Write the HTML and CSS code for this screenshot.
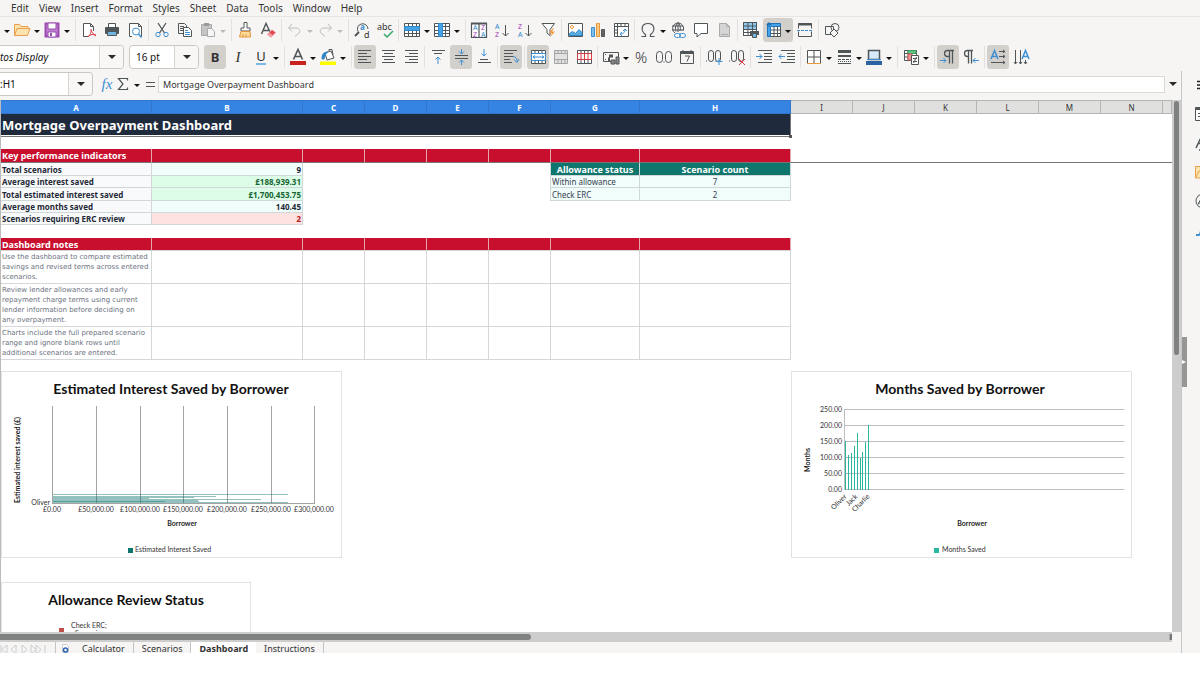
FILE: index.html
```html
<!DOCTYPE html>
<html lang="en">
<head>
<meta charset="utf-8">
<title>Mortgage Overpayment Dashboard</title>
<link rel="stylesheet" href="styles.css">
</head>
<body>
<div class="app">
<nav class="menu">
<button>Edit</button><button>View</button><button>Insert</button><button>Format</button><button>Styles</button><button>Sheet</button><button>Data</button><button>Tools</button><button>Window</button><button>Help</button>
</nav>

<div class="toolbar standard" role="toolbar" aria-label="Standard">
<button class="caret" aria-label="New options"></button>
<button class="tool" aria-label="Open"><svg viewBox="0 0 18 18"><path d="M1.500 14.500V3.500h5l1.500 2h7v2M1.500 14.500l2.500-7h13l-2.500 7z" fill="#fce3b0" stroke="#e9a04a"/></svg></button>
<button class="caret" aria-label="Open options"></button>
<button class="tool" aria-label="Save"><svg viewBox="0 0 18 18"><path d="M2.500 2.500h13v13h-13z" fill="#bf7fd0" stroke="#9a4fb0" stroke-width="2"/><path d="M5 2h8v6H5z" fill="#fff" stroke="#9a4fb0"/><path d="M5 11h8v5H5z" fill="#fff" stroke="#9a4fb0"/><path d="M7 12h2v3H7z" fill="#9a4fb0" stroke="none"/></svg></button>
<button class="caret" aria-label="Save options"></button>
<i class="sep"></i>
<button class="tool" aria-label="Export as PDF"><svg viewBox="0 0 18 18"><path d="M8 15.500H3.500v-13h7l3 3V10M10.500 2.500v3h3" fill="#fff"/><path class="red" d="M8 16c3-3 3.500-6 3-8M8.500 15c2-1.500 5-2 7.500-1M11 9c1 3 3 5 5 6"/></svg></button>
<button class="tool" aria-label="Print"><svg viewBox="0 0 18 18"><path d="M5.500 6V2.500h7V6" fill="#fff"/><rect x="2" y="6" width="14" height="7" rx="1" fill="#4f5659" stroke="none"/><path d="M4.500 10.500h9v4h-9z" fill="#71b5e3" stroke="#4f5659"/></svg></button>
<button class="tool" aria-label="Print preview"><svg viewBox="0 0 18 18"><path d="M6 15.500H3.500v-13h9l3 3v10h-1M12.500 2.500v3h3" fill="#fff"/><circle class="blue" cx="10" cy="10.500" r="3.500"/><path class="blue" d="M12.500 13l3 3.500" stroke-width="1.500"/></svg></button>
<i class="sep"></i>
<button class="tool" aria-label="Cut"><svg viewBox="0 0 18 18"><path d="M5 2l6.500 10M13 2L6.500 12" stroke-width="1.300"/><circle class="blue" cx="5" cy="13.500" r="2.200"/><circle class="blue" cx="13" cy="13.500" r="2.200"/></svg></button>
<button class="tool" aria-label="Copy"><svg viewBox="0 0 18 18"><path d="M7 12.500H2.500v-10h6l2 2V6M4 5.500h4M4 7.500h3M4 9.500h3"/><path d="M7.500 6.500h5l3 3v6h-8z" fill="#fff"/><path class="blue" d="M9 9.500h3M9 11.500h5M9 13.500h5"/></svg></button>
<button class="tool off" aria-label="Paste"><svg viewBox="0 0 18 18"><path d="M2.500 3.500h10v11h-10z" fill="#c5c5c5" stroke="#aaa"/><path d="M5 2h5v3H5z" fill="#999" stroke="none"/><path d="M8.500 7.500h4l3 3v5h-7z" fill="#f6f6f6" stroke="#aaa"/></svg></button>
<button class="caret off" aria-label="Paste options"></button>
<i class="sep"></i>
<button class="tool" aria-label="Clone formatting"><svg viewBox="0 0 18 18"><path d="M8 7V1.500h3V7h3v3H5V7z" fill="#fff"/><path d="M5 10.500l-1.500 5.500h11l-.5-5.500zM7 13v3M10 13v3" fill="#fcdc9d" stroke="#e4963a"/></svg></button>
<button class="tool" aria-label="Clear formatting"><svg viewBox="0 0 18 18"><path d="M2.500 13L7 2.500 11.500 12M4 9.500h6" stroke-width="1.400"/><path d="M8 13.500l5-5 4 3-5 5z" fill="#e04b53" stroke="#fff" stroke-width=".5"/><path d="M8 13.500l2-2 4 3-2 2z" fill="#f0a0a5" stroke="none"/></svg></button>
<i class="sep"></i>
<button class="tool off" aria-label="Undo"><svg viewBox="0 0 18 18"><path d="M6 3L2.500 7 6 10.500M3 7h7c4 0 5 4 2 6l-3 2.500" stroke="#bbb"/></svg></button>
<button class="caret off" aria-label="Undo options"></button>
<button class="tool off" aria-label="Redo"><svg viewBox="0 0 18 18"><path d="M12 3l3.500 4-3.500 3.500M15 7H8c-4 0-5 4-2 6l3 2.500" stroke="#bbb"/></svg></button>
<button class="caret off" aria-label="Redo options"></button>
<i class="sep"></i>
<button class="tool" aria-label="Find and replace"><svg viewBox="0 0 18 18"><path d="M5 10.500A5.300 5.300 0 1 1 15 8"/><path d="M6 11l-4 4" stroke-width="2"/><text class="ta" x="7" y="9">a</text><text class="tb" x="11" y="17">d</text></svg></button>
<button class="tool" aria-label="Spelling"><svg viewBox="0 0 18 18"><text class="abc" x="1" y="9">abc</text><path d="M8 13l3 3 6-6" stroke="#34a866" stroke-width="1.500"/></svg></button>
<i class="sep"></i>
<button class="tool" aria-label="Row"><svg viewBox="0 0 18 18"><path d="M1.500 2.500h15v13h-15zM5.500 2.500v13M9.500 2.500v13M13.500 2.500v13M1.500 12.500h15" fill="#fff"/><path d="M1.500 5.500h15v4h-15z" fill="#45a4e6" stroke="#2f86c8"/></svg></button>
<button class="caret" aria-label="Row options"></button>
<button class="tool" aria-label="Column"><svg viewBox="0 0 18 18"><path d="M1.500 2.500h15v13h-15zM1.500 5.500h15M1.500 9.500h15M1.500 12.500h15M12.500 2.500v13" fill="#fff"/><path d="M5.500 2.500h4v13h-4z" fill="#45a4e6" stroke="#2f86c8"/></svg></button>
<button class="caret" aria-label="Column options"></button>
<i class="sep"></i>
<button class="tool" aria-label="Sort"><svg viewBox="0 0 18 18"><path d="M1.500 2.500h15v14h-15zM9 2v15" fill="#fff" stroke-width="1.200"/><path d="M1 2.500h16" stroke-width="2"/><text class="sa" x="3" y="9">A</text><text class="sz" x="3" y="16">Z</text><text class="sz" x="11" y="9">Z</text><text class="sa" x="11" y="16">A</text></svg></button>
<button class="tool" aria-label="Sort ascending"><svg viewBox="0 0 18 18"><text class="sa" x="2" y="8">A</text><text class="sz" x="2" y="16">Z</text><path d="M12.500 4v11M9.500 12l3 3 3-3"/></svg></button>
<button class="tool" aria-label="Sort descending"><svg viewBox="0 0 18 18"><text class="sz" x="2" y="8">Z</text><text class="sa" x="2" y="16">A</text><path d="M12.500 4v11M9.500 12l3 3 3-3"/></svg></button>
<button class="tool" aria-label="AutoFilter"><svg viewBox="0 0 18 18"><path d="M3 2.500h12.500L11 8.500v6l-3-2.500V8.500z" fill="#fff"/><path d="M14 7l-4 5h3l-2 4.500 5-6h-3l2-3.500z" fill="#f49b42" stroke="none"/></svg></button>
<i class="sep"></i>
<button class="tool" aria-label="Insert image"><svg viewBox="0 0 18 18"><path d="M2.500 2.500h14v13h-14z" fill="#fff"/><circle cx="6" cy="6" r="1.500" stroke="#f09a3c"/><path d="M3.500 14.500v-2l3-2 3 2 3.500-4 3 3v3z" fill="#5dacdf" stroke="#2f86c8"/></svg></button>
<button class="tool" aria-label="Insert chart"><svg viewBox="0 0 18 18"><path d="M2.500 6.500h3v9h-3z" fill="#80c1ec" stroke="#3d8fd1"/><path d="M7.500 2.500h3v13h-3z" fill="#fcc880" stroke="#e9983d"/><path d="M12.500 8.500h3v7h-3z" fill="#666"/></svg></button>
<button class="tool" aria-label="Pivot table"><svg viewBox="0 0 18 18"><path d="M2.500 2.500h14v13h-14zM2.500 5.500h14M5.500 2.500v13M9 2.500v3M13 2.500v3M2.500 9h3M2.500 12h3" fill="#fff"/><path class="blue" d="M8 13c4 0 5-2 5-5M8 13l2-2M8 13l2 2M13 8l-2 2M13 8l2 2"/></svg></button>
<i class="sep"></i>
<button class="tool" aria-label="Special character"><svg viewBox="0 0 18 18"><path d="M2.500 15.500h4v-2C1 9.500 2.500 2.500 9 2.500s8 7 2.500 11v2h4" stroke-width="1.200"/></svg></button>
<button class="caret" aria-label="Special character options"></button>
<button class="tool" aria-label="Hyperlink"><svg viewBox="0 0 18 18"><path d="M6 12A5.500 5.500 0 1 1 14 10M3 5h11M3 9h11M9 1.500c-3 3-3 6-2 9M9 1.500c2 2 3 5 2 8.500M9 2v9"/><rect class="blue" x="5.500" y="12.500" width="6" height="4" rx="2"/><rect class="blue" x="10.500" y="12.500" width="6" height="4" rx="2"/></svg></button>
<button class="tool" aria-label="Comment"><svg viewBox="0 0 18 18"><path d="M2.500 2.500h13v10H9l-4 3.500v-3.500H2.500z" fill="#fff"/></svg></button>
<button class="tool off" aria-label="Headers and footers"><svg viewBox="0 0 18 18"><path d="M4.500 2.500h7l3 3v10h-10z" fill="#d5d5d5" stroke="#aaa"/><path d="M6 13.500h7M11.500 2.500v3h3" stroke="#aaa"/></svg></button>
<i class="sep"></i>
<button class="tool" aria-label="Define print area"><svg viewBox="0 0 18 18"><path d="M1.500 1.500h13v13h-13z" fill="#fff"/><path d="M1.500 1.500h13v7h-13z" fill="#8ecaf0" stroke="none"/><path d="M1.500 1.500h13v13h-13zM1.500 5h13M1.500 8.500h13M1.500 11.500h13M6 1.500v13M10.500 1.500v13"/><rect x="8" y="10" width="9" height="4" fill="#4f5659" stroke="none"/><path d="M10.500 12.500h4v4h-4z" fill="#71b5e3"/></svg></button>
<span class="split on"><button class="tool" aria-label="Freeze rows and columns"><svg viewBox="0 0 18 18"><path d="M5.500 5.500h10v10h-10zM9 5v11M12.500 5v11M5 9h11M5 12.500h11" fill="#fff"/><path d="M2.500 2.500h13v3h-10v10h-3z" fill="#45a4e6" stroke="#2272b5"/><path d="M4 1v5M1.500 3.500h5" stroke="#2272b5"/></svg></button><button class="caret" aria-label="Freeze options"></button></span>
<button class="tool" aria-label="Split window"><svg viewBox="0 0 18 18"><path d="M2.500 7.500v-5h13v5M2.500 10.500v5h13v-5"/><path d="M2 3.500h14" stroke-width="2"/><path class="blue" d="M1 9.500h16" stroke-dasharray="3 1"/></svg></button>
<i class="sep"></i>
<button class="tool" aria-label="Show draw functions"><svg viewBox="0 0 18 18"><path d="M2.500 5.500h8v8h-8z"/><circle cx="12" cy="6.500" r="4"/><path d="M11 8l4 4-4 4-4-4z" fill="#f6f5f4"/></svg></button>
</div>

<div class="toolbar format" role="toolbar" aria-label="Formatting">
<span class="combo font"><input aria-label="Font name" value="tos Display"><button aria-label="Choose font"></button></span>
<span class="combo size"><input aria-label="Font size" value="16 pt"><button aria-label="Choose size"></button></span>
<button class="tool on glyph bold" aria-label="Bold">B</button>
<button class="tool glyph ital" aria-label="Italic">I</button>
<button class="tool glyph under" aria-label="Underline"><span>U</span></button>
<button class="caret" aria-label="Underline options"></button>
<i class="sep"></i>
<button class="tool" aria-label="Font colour"><svg viewBox="0 0 18 18"><path d="M4.500 11.500L9 1.500l4.500 10M6 8.500h6" stroke-width="1.600"/><path d="M1 13h16v4H1z" fill="#c9211e" stroke="none"/></svg></button>
<button class="caret" aria-label="Font colour options"></button>
<button class="tool" aria-label="Highlighting"><svg viewBox="0 0 18 18"><path d="M6 5l6-2 3 7-7 2zM10 3V1.500h3L14 7" fill="#fff"/><path d="M3 11c0-4 1-7 6-7-3 1-3 5-4 7z" fill="#2f86c8" stroke="#2f86c8"/><path d="M1 13.500h16V17H1z" fill="#ffff00" stroke="none"/></svg></button>
<button class="caret" aria-label="Highlighting options"></button>
<i class="sep"></i>
<button class="tool on" aria-label="Align left"><svg viewBox="0 0 18 18"><path d="M2 2.500h13M2 5.500h9M2 8.500h13M2 11.500h9M2 14.500h13"/></svg></button>
<button class="tool" aria-label="Centre"><svg viewBox="0 0 18 18"><path d="M3 2.500h13M5 5.500h9M3 8.500h13M5 11.500h9M3 14.500h13"/></svg></button>
<button class="tool" aria-label="Align right"><svg viewBox="0 0 18 18"><path d="M3 2.500h13M7 5.500h9M3 8.500h13M7 11.500h9M3 14.500h13"/></svg></button>
<i class="sep"></i>
<button class="tool" aria-label="Align top"><svg viewBox="0 0 18 18"><path d="M3 2.500h13M5 5.500h8"/><path class="blue" d="M9 16V9M6.500 11.500L9 9l2.500 2.500"/></svg></button>
<button class="tool on" aria-label="Centre vertically"><svg viewBox="0 0 18 18"><path d="M3 7.500h13M3 10.500h13"/><path class="blue" d="M9.500 1v5M7 3.500L9.500 6 12 3.500M9.500 17v-5M7 14.500l2.500-2.500 2.500 2.500"/></svg></button>
<button class="tool" aria-label="Align bottom"><svg viewBox="0 0 18 18"><path d="M3 14.500h13M5 11.500h8"/><path class="blue" d="M9 1v7M6.500 5.500L9 8l2.500-2.500"/></svg></button>
<i class="sep"></i>
<button class="tool on" aria-label="Wrap text"><svg viewBox="0 0 18 18"><path d="M2 2.500h13M2 5.500h9M2 8.500h9M2 11.500h6M2 14.500h8"/><path class="blue" d="M11 8.500c3 0 4 2 4 5M12 11.500l3 3 2-3.500"/></svg></button>
<i class="sep"></i>
<button class="tool on" aria-label="Merge and centre"><svg viewBox="0 0 18 18"><path d="M2.500 2.500h14v13h-14zM6 2.500v3M9.500 2.500v3M13 2.500v3M6 12.500v3M9.500 12.500v3M13 12.500v3" fill="#fff"/><path class="blue" d="M2.500 5.500h14v7h-14zM4 9h11M6 7.500L4 9l2 1.500M13 7.500L15 9l-2 1.500"/></svg></button>
<button class="tool off" aria-label="Merge cells"><svg viewBox="0 0 18 18"><path d="M2.500 2.500h13v13h-13zM2.500 5.500h13M2.500 11.500h13M6 2.500v3M9.500 2.500v3M13 2.500v3M6 11.500v4M9.500 11.500v4M13 11.500v4" fill="#e2e2e2" stroke="#a5a5a5"/></svg></button>
<button class="tool" aria-label="Unmerge cells"><svg viewBox="0 0 18 18"><path d="M2.500 2.500h14v13h-14zM6 2.500v3M9.500 2.500v3M13 2.500v3M6 12v3M9.500 12v3M13 12v3" fill="#fff"/><path class="red" d="M2.500 5.500h14v6h-14zM6 5.500v6M9.500 5.500v6M13 5.500v6"/></svg></button>
<i class="sep"></i>
<button class="tool" aria-label="Currency"><svg viewBox="0 0 18 18"><path d="M9 13.500H1.500v-9h15V9M3 6.500h1M3 11.500h1"/><path d="M7 6.500h4v3H8v4H6v-4h1z" fill="#555" stroke="none"/><path d="M9 12h4v4H9zM14 9h3v7h-3z" fill="#888"/></svg></button>
<button class="caret" aria-label="Currency options"></button>
<button class="tool glyph num" aria-label="Percent">%</button>
<button class="tool" aria-label="Number"><svg viewBox="0 0 18 18"><rect x="1.500" y="3.500" width="6" height="11" rx="3"/><rect x="10.500" y="3.500" width="6" height="11" rx="3"/><path d="M8.500 14h1"/></svg></button>
<button class="tool" aria-label="Date"><svg viewBox="0 0 18 18"><path d="M2.500 3.500h13v12h-13zM5 2v3M13 2v3M7 8h4.500L9 13.500"/><path d="M3 5h12" stroke-width="2"/></svg></button>
<i class="sep"></i>
<button class="tool" aria-label="Add decimal place"><svg viewBox="0 0 18 18"><rect x="3.500" y="2.500" width="5" height="11" rx="2.500"/><rect x="10.500" y="2.500" width="5" height="11" rx="2.500"/><path d="M1 13h1"/><path class="blue" d="M14 10v7M10.500 13.500h7"/></svg></button>
<button class="tool" aria-label="Delete decimal place"><svg viewBox="0 0 18 18"><rect x="3.500" y="2.500" width="5" height="11" rx="2.500"/><rect x="10.500" y="2.500" width="5" height="11" rx="2.500"/><path d="M1 13h1"/><path class="red" d="M11 11l6 6M17 11l-6 6"/></svg></button>
<i class="sep"></i>
<button class="tool" aria-label="Increase indent"><svg viewBox="0 0 18 18"><path d="M3 2.500h14M9 5.500h8M9 8.500h8M9 11.500h8M3 14.500h14"/><path class="blue" d="M1 8.500h6M4.500 6L7 8.500 4.500 11"/></svg></button>
<button class="tool" aria-label="Decrease indent"><svg viewBox="0 0 18 18"><path d="M3 2.500h14M9 5.500h8M9 8.500h8M9 11.500h8M3 14.500h14"/><path class="blue" d="M1 8.500h6M3.500 6L1 8.500 3.500 11"/></svg></button>
<i class="sep"></i>
<button class="tool" aria-label="Borders"><svg viewBox="0 0 18 18"><path d="M2.500 15.500v-13h13v13M9 2.500v13M2.500 9h13" fill="#fff"/><path d="M2 15.500h14" stroke="#e9983d"/></svg></button>
<button class="caret" aria-label="Border options"></button>
<button class="tool" aria-label="Border style"><svg viewBox="0 0 18 18"><path d="M3 3.500h13" stroke-width="3"/><path d="M3 8h13" stroke-width="2"/><path d="M3 11.500h13" stroke-dasharray="3 1"/><path d="M3 13.500h13" stroke-dasharray="1 1"/><path d="M3 15.500h13"/></svg></button>
<button class="caret" aria-label="Border style options"></button>
<button class="tool" aria-label="Border colour"><svg viewBox="0 0 18 18"><path d="M3.500 2.500h11v9h-11z" fill="#d6eafa" stroke-width="1.500"/><path d="M2 11.500h14" class="blue"/><path d="M1 13h16v4H1z" fill="#2b62a4" stroke="none"/></svg></button>
<button class="caret" aria-label="Border colour options"></button>
<i class="sep"></i>
<button class="tool" aria-label="Conditional formatting"><svg viewBox="0 0 18 18"><path d="M2.500 2.500h12v10h-12zM2.500 5.500h12M2.500 9h12M6 2.500v10" fill="#fff"/><path d="M6 2.500h8v3H6z" fill="#63c584" stroke="#3d9d5e"/><path d="M6 6h4v6H6z" fill="#f09393" stroke="#d06060"/><path d="M9.500 7.500h7v9h-7zM11 10.500h4M11 13.500h4M14.500 9l-3 6" fill="#fff"/></svg></button>
<button class="caret" aria-label="Conditional formatting options"></button>
<i class="sep"></i>
<button class="tool on" aria-label="Left to right"><svg viewBox="0 0 18 18"><path d="M15 2.500H8.500a3 3 0 0 0 0 6H10M10.500 2.500v13M13.500 2.500v13" stroke-width="1.300"/><path class="blue" d="M1 12.500h6M4.500 10L7 12.500 4.500 15"/></svg></button>
<button class="tool" aria-label="Right to left"><svg viewBox="0 0 18 18"><path d="M11 2.500H5.500a3 3 0 0 0 0 6H6M6.500 2.500v13M9.500 2.500v13" stroke-width="1.300"/><path class="blue" d="M17 12.500h-6M13.500 10L11 12.500l2.500 2.500"/></svg></button>
<i class="sep"></i>
<button class="tool on" aria-label="Text left to right"><svg viewBox="0 0 18 18"><path class="blue" d="M2 11L5.500 2.500 9 11M3 8.500h5" stroke-width="1.500"/><path d="M10 3.500h6M14 2l2 1.500L14 5M10 8.500h6M14 7l2 1.500-2 1.500M2 14.500h14M14 13l2 1.500-2 1.500"/></svg></button>
<button class="tool" aria-label="Text top to bottom"><svg viewBox="0 0 18 18"><path class="blue" d="M10 11l3.500-8.500L17 11M11 8.500h5" stroke-width="1.500"/><path d="M3.500 2v14M2 14l1.500 2L5 14M8.500 2v14M7 14l1.500 2 1.500-2M13.500 12v4M12 14l1.500 2 1.500-2"/></svg></button>
</div>

<div class="body">
<main class="work">
<div class="formula">
<span class="combo name"><input aria-label="Name box" value=":H1"><button aria-label="Named ranges"></button></span>
<button class="fx" aria-label="Function wizard"><i>fx</i></button>
<button class="sigma" aria-label="Select function"><svg viewBox="0 0 12 14"><path d="M10.500 3.500v-2h-9L6 7l-4.500 5.500h9v-2" stroke-width="1.200"/></svg></button>
<button class="caret" aria-label="Function options"></button>
<button class="equals" aria-label="Formula"></button>
<input class="line" aria-label="Input line" value="Mortgage Overpayment Dashboard">
<button class="expand" aria-label="Expand formula bar"></button>
</div>
<div class="view">
<div class="sheet">
<table>
<colgroup><col class="wide"><col class="wide"><col class="std"><col class="std"><col class="std"><col class="std"><col class="mid"><col class="wide"><col class="std"><col class="std"><col class="std"><col class="std"><col class="std"><col class="std"><col></colgroup>
<thead><tr><th class="sel">A</th><th class="sel">B</th><th class="sel">C</th><th class="sel">D</th><th class="sel">E</th><th class="sel">F</th><th class="sel">G</th><th class="sel">H</th><th>I</th><th>J</th><th>K</th><th>L</th><th>M</th><th>N</th><th></th></tr></thead>
<tbody>
<tr><td class="title" colspan="8">Mortgage Overpayment Dashboard<i class="grip"></i></td><td colspan="7"></td></tr>
<tr><td colspan="15"></td></tr>
<tr class="section frozen"><td>Key performance indicators</td><td></td><td></td><td></td><td></td><td></td><td></td><td></td><td class="plain" colspan="7"></td></tr>
<tr class="tall"><td class="label">Total scenarios</td><td class="value mint">9</td><td colspan="3"></td><td class="edge"></td><td class="head">Allowance status</td><td class="head">Scenario count</td><td colspan="7"></td></tr>
<tr><td class="label">Average interest saved</td><td class="value good">£188,939.31</td><td colspan="3"></td><td class="edge"></td><td class="text mint">Within allowance</td><td class="count mint">7</td><td colspan="7"></td></tr>
<tr class="tall"><td class="label">Total estimated interest saved</td><td class="value good">£1,700,453.75</td><td colspan="3"></td><td class="edge"></td><td class="text mint">Check ERC</td><td class="count mint">2</td><td colspan="7"></td></tr>
<tr><td class="label">Average months saved</td><td class="value mint">140.45</td><td colspan="13"></td></tr>
<tr><td class="label">Scenarios requiring ERC review</td><td class="value bad">2</td><td colspan="13"></td></tr>
<tr class="tall"><td colspan="15"></td></tr>
<tr class="section"><td>Dashboard notes</td><td></td><td></td><td></td><td></td><td></td><td></td><td></td><td class="plain" colspan="7"></td></tr>
<tr class="note"><td>Use the dashboard to compare estimated<br>savings and revised terms across entered<br>scenarios.</td><td></td><td></td><td></td><td></td><td></td><td></td><td></td><td class="plain" colspan="7"></td></tr>
<tr class="note"><td>Review lender allowances and early<br>repayment charge terms using current<br>lender information before deciding on<br>any overpayment.</td><td></td><td></td><td></td><td></td><td></td><td></td><td></td><td class="plain" colspan="7"></td></tr>
<tr class="note"><td>Charts include the full prepared scenario<br>range and ignore blank rows until<br>additional scenarios are entered.</td><td></td><td></td><td></td><td></td><td></td><td></td><td></td><td class="plain" colspan="7"></td></tr>
</tbody>
</table>

<svg class="chart interest" viewBox="0 0 339 185" role="img" aria-label="Estimated Interest Saved by Borrower">
<text class="ct" x="169" y="22">Estimated Interest Saved by Borrower</text>
<text class="at" transform="translate(18 88) rotate(-90)">Estimated interest saved (£)</text>
<path class="grid" d="M50.500 34v98M94.500 34v98M138.500 34v98M181.500 34v98M225.500 34v98M269.500 34v98M312.500 34v98M50 131.500h263"/>
<path class="bars" d="M51 122.500h235M51 124.500h163M51 126.500h96M51 127.500h208M51 129.500h146M51 130.500h235"/>
<path class="bars" d="M51 125.500h141M51 128.500h145M51 129.500h112"/>
<text class="tk end" x="48" y="133">Oliver</text>
<g class="tk"><text x="50" y="140">£0.00</text><text x="94" y="140">£50,000.00</text><text x="138" y="140">£100,000.00</text><text x="181" y="140">£150,000.00</text><text x="225" y="140">£200,000.00</text><text x="269" y="140">£250,000.00</text><text x="312" y="140">£300,000.00</text></g>
<text class="at" x="180" y="154">Borrower</text>
<path d="M126 176h5v5h-5z" fill="#0f766e"/><text class="tk start" x="133" y="180">Estimated Interest Saved</text>
</svg>
<svg class="chart months" viewBox="0 0 339 185" role="img" aria-label="Months Saved by Borrower">
<text class="ct" x="168" y="22">Months Saved by Borrower</text>
<text class="at" transform="translate(18 88) rotate(-90)">Months</text>
<path class="grid light" d="M53 37.500h279M53 53.500h279M53 69.500h279M53 85.500h279M53 101.500h279M53 117.500h279M52.500 37v81"/>
<path class="teal" d="M53.500 118V69M56.500 118V83M59.500 118V81M62.500 118V74M65.500 118V61M68.500 118V86M70.500 118V80M73.500 118V70M76.500 118V53"/>
<g class="tk end"><text x="50" y="40">250.00</text><text x="50" y="56">200.00</text><text x="50" y="72">150.00</text><text x="50" y="88">100.00</text><text x="50" y="104">50.00</text><text x="50" y="120">0.00</text>
<text transform="translate(55 125) rotate(-45)">Oliver</text><text transform="translate(66 125) rotate(-45)">Jack</text><text transform="translate(78 125) rotate(-45)">Charlie</text></g>
<text class="at" x="180" y="154">Borrower</text>
<path d="M142 176h5v5h-5z" fill="#2ab7a0"/><text class="tk start" x="150" y="180">Months Saved</text>
</svg>
<svg class="chart status" viewBox="0 0 248 148" role="img" aria-label="Allowance Review Status">
<text class="ct" x="124" y="22">Allowance Review Status</text>
<path d="M57 45h5v5h-5z" fill="#c0504d"/>
<text class="tk start" x="69" y="45">Check ERC;</text><text class="tk start" x="73" y="53">Scenario</text>
</svg>
</div>
<div class="vbar"><div class="thumb"></div></div>
</div>
<div class="hrow"><div class="hbar"><div class="thumb"></div><div class="stop"></div></div></div>
<div class="tabs">
<svg class="arrows" viewBox="0 0 48 14"><path d="M1 3v9M7 3L2 7.500 7 12zM16 3l-5 4.500L16 12zM22 3l5 4.500L22 12zM31 3l5 4.500L31 12zM36 3l5 4.500L36 12zM45 3v9"/></svg>
<button class="add" aria-label="Add sheet"><svg viewBox="0 0 9 12"><path d="M1.500 1.500h4l2 2v6h-6z" fill="#fff" stroke="#ccc"/><circle cx="4.500" cy="7" r="2" stroke="#2b62b8" stroke-width="1.500"/></svg></button>
<button>Calculator</button><button>Scenarios</button><button class="current">Dashboard</button><button>Instructions</button>
</div>
</main>
<aside class="side">
<button class="handle" aria-label="Hide sidebar"></button>
<div class="deck">
<button aria-label="Sidebar settings"><svg viewBox="0 0 18 18"><path d="M2 5.500h14M2 9h14M2 12.500h14" stroke="#222" stroke-width="1.500"/></svg></button>
<button aria-label="Properties"><svg viewBox="0 0 18 18"><path d="M.5 2.500h17v13H.5zM3 8.500h5M3 11.500h5" fill="#fff"/><path d="M1 4h16" stroke-width="2"/></svg></button>
<button aria-label="Styles"><svg viewBox="0 0 18 18"><path d="M1 14L6.500 2.500 12 14M3 9.500h7M4 16h3" stroke-width="1.500"/></svg></button>
<button aria-label="Gallery"><svg viewBox="0 0 18 18"><path d="M.5 15V3.500h6l2 2h7V15zM1 14l3-6h12" fill="#fce3b0" stroke="#e9a04a"/></svg></button>
<button aria-label="Navigator"><svg viewBox="0 0 18 18"><circle cx="8" cy="9" r="7"/><path d="M3 12l3-5 4-2-2 4z"/></svg></button>
<button aria-label="Functions"><svg viewBox="0 0 18 18"><path class="blue" d="M1 14h3c2 0 2-9 5-9" stroke-width="2"/></svg></button>
</div>
</aside>
</div>
</div>
</body>
</html>
```
FILE: styles.css
```css
* { box-sizing: border-box; }
body { margin: 0; background: #fff; font-family: "Noto Sans", sans-serif; color: #333; }
button, input { font: inherit; color: inherit; margin: 0; padding: 0; border: 0; background: none; }
svg { display: block; fill: none; stroke: #505558; overflow: visible; }
svg text { stroke: none; fill: #333; }
.blue { stroke: #3d8fd1; }
.red { stroke: #d93a41; }

.app { display: flex; flex-direction: column; height: calc(100vh - 22px); background: #f6f5f4; overflow: hidden; }

.menu { display: flex; gap: 10px; height: 17px; padding-left: 11px; border-bottom: 1px solid #e6e5e3; font-size: 10px; line-height: 16px; }

.toolbar { display: flex; align-items: center; gap: 1px; height: 27px; flex: none; padding-bottom: 1px; }
.standard { padding-left: 4px; }
.tool { display: flex; align-items: center; justify-content: center; flex: none; width: 22px; height: 24px; border-radius: 3px; }
.tool svg { width: 18px; height: 18px; }
.on { background: #d3d0cc; border-radius: 3px; }
.split { display: flex; align-items: center; width: 30px; height: 24px; }
.caret { flex: none; width: 6px; height: 24px; }
.caret::before { content: ""; display: block; margin: 2px auto 0; width: 0; border: 3px solid transparent; border-top-color: #111; border-bottom: 0; }
.caret.off::before { border-top-color: #bbb; }
.sep { flex: none; width: 1px; height: 22px; margin: 0 1px; background: #e2e1df; }
.caret + .sep { margin-left: 4px; }
.ta { font-size: 8px; font-weight: bold; fill: #3d8fd1; }
.tb { font-size: 9px; }
.abc { font-size: 9px; }
.sa { font-size: 7px; fill: #2f86c8; }
.sz { font-size: 7px; fill: #a33fb5; }
.glyph { font-size: 13px; line-height: 24px; }
.bold { font-weight: bold; }
.ital { font-family: "Liberation Serif", serif; font-style: italic; font-size: 15px; }
.under span { border-bottom: 2px solid #7bb8e4; line-height: 13px; }
.num { font-size: 15px; font-weight: 300; }

.combo { display: flex; flex: none; height: 24px; border: 1px solid #cdc7c2; border-radius: 4px; background: #fff; font-size: 10px; overflow: hidden; }
.combo input { flex: 1; min-width: 0; color: #111; }
.combo button { width: 24px; border-left: 1px solid #d8d4d0; background: #f8f7f6; }
.combo button::before, .expand::before { content: ""; display: block; width: 0; margin: 0 auto; border: 4px solid transparent; border-top-color: #2b2b2b; border-bottom: 0; }
.font { width: 124px; margin-right: 4px; border-left: 0; border-radius: 0 4px 4px 0; font-style: italic; }
.size { width: 70px; margin-right: 4px; }
.size input { padding-left: 6px; }

.body { display: flex; flex: 1; min-height: 0; }
.work { display: flex; flex-direction: column; flex: 1; min-width: 0; }
.formula { display: flex; align-items: center; flex: none; height: 29px; padding-bottom: 3px; }
.name { width: 93px; margin-right: 7px; border-left: 0; border-radius: 0 4px 4px 0; }
.fx { width: 14px; color: #3d8fd1; font: 15px "Liberation Serif", serif; }
.sigma { width: 12px; margin: 0 5px 0 3px; }
.sigma svg { width: 12px; height: 14px; }
.equals { width: 9px; height: 5px; margin: 0 3px 0 6px; border: solid #555; border-width: 1px 0; }
.line { flex: 1; height: 17px; padding-left: 4px; border: 1px solid #dcdad7; background: #fff; font-size: 9px; }
.expand { width: 16px; }

.view { display: flex; flex: 1; min-height: 0; }
.sheet { position: relative; flex: 1; min-width: 0; overflow: hidden; background: #fff; border-left: 1px solid #bcbcbc; }
table { width: 100%; table-layout: fixed; border-collapse: separate; border-spacing: 0; font-size: 8px; line-height: 11px; }
.wide { width: 151px; }
.std { width: 62px; }
.mid { width: 89px; }
th { height: 14px; padding: 0; border: solid #b5b5b5; border-width: 1px 1px 1px 0; background: #e0e0df; color: #333; font-weight: normal; }
th.sel { background: #3584e4; border-color: #2f76cc; color: #fff; font-weight: bold; }
td { height: 12px; padding: 0 1px; white-space: nowrap; }
.title { position: relative; height: 23px; background: #1f2a3d; border: solid #777; border-width: 0 1px 1px 0; box-shadow: inset 0 -1px #fff; color: #fff; font-size: 13px; line-height: 20px; font-weight: bold; }
.grip { position: absolute; right: -2px; bottom: -2px; width: 3px; height: 3px; background: #555; }
.section td { height: 13px; background: #c8102e; color: #fff; font-size: 9px; font-weight: bold; border-right: 1px solid #e3a5ae; border-bottom: 1px solid #d5d5d5; }
.section .plain { background: none; border: 0; }
.frozen td, .frozen .plain { height: 14px; border-bottom: 1px solid #777; }
.tall td { height: 13px; }
.label, .value, .text, .count, .head { border: solid #d0d7d9; border-width: 0 1px 1px 0; }
.label { background: #f8fafc; color: #1f2937; font-weight: bold; }
.value { text-align: right; color: #1f2937; font-weight: bold; }
.mint { background: #f0fdfa; }
.good { background: #dcfce7; color: #166534; }
.bad { background: #fee2e2; color: #b91c1c; }
.edge { border-right: 1px solid #d0d7d9; }
.head { background: #0f766e; color: #fff; text-align: center; font-size: 9px; font-weight: bold; }
.text, .count { color: #374151; }
.count { text-align: center; }
.note td { padding-top: 1px; padding-bottom: 1px; border: solid #d5d8da; border-width: 0 1px 1px 0; color: #6b7280; font-family: "DejaVu Sans", sans-serif; font-size: 7px; line-height: 10px; }
.note .plain { border: 0; }

.chart { position: absolute; background: #fff; border: 1px solid #e2e2e2; font-family: Lato, sans-serif; }
.interest { left: 0; top: 271px; width: 341px; height: 187px; }
.months { left: 790px; top: 271px; width: 341px; height: 187px; }
.status { left: 0; top: 482px; width: 250px; height: 150px; }
.chart path { stroke: none; }
.ct { font-size: 14px; font-weight: bold; text-anchor: middle; fill: #111; }
.at { font-size: 7px; font-weight: bold; text-anchor: middle; fill: #222; }
.tk, .tk text { font-size: 7px; text-anchor: middle; }
.end, .end text { text-anchor: end; }
.start { text-anchor: start; }
.chart .grid { stroke: #a3a3a3; }
.chart .light { stroke: #bdbdbd; }
.chart .bars { stroke: #0f766e; stroke-opacity: .45; }
.chart .teal { stroke: #2ab7a0; }

.vbar { width: 9px; flex: none; padding: 1px 2px; background: #cdcdcd; }
.vbar .thumb { width: 5px; height: 48%; border-radius: 3px; background: #7f8281; }
.hrow { flex: none; padding-right: 9px; }
.hbar { display: flex; align-items: center; justify-content: space-between; height: 10px; background: #cdcdcd; }
.hbar .thumb { width: 531px; height: 6px; border-radius: 0 3px 3px 0; background: #7f8281; }
.hbar .stop { width: 3px; height: 6px; background: #777; border-left: 1px solid #aaa; }
.tabs { display: flex; flex: none; height: 11px; overflow: hidden; font-size: 9px; line-height: 14px; }
.tabs > button { flex: none; height: 14px; padding: 0 8px; border-right: 1px solid #c5c5c5; }
.tabs .arrows { width: 48px; height: 14px; margin-right: 7px; stroke: #ccc; }
.tabs > .add { width: 19px; padding: 0 5px; border-left: 1px solid #c5c5c5; border-right: 0; }
.add svg { width: 9px; height: 12px; }
.tabs > .current { background: #fff; font-weight: bold; border-right: 0; }

.side { display: flex; align-items: flex-start; width: 19px; flex: none; border-left: 1px solid #c6c6c6; overflow: hidden; }
.handle { align-self: center; flex: none; width: 5px; height: 50px; background: #969694; }
.handle::before { content: ""; display: block; width: 0; border: 2px solid transparent; border-left: 4px solid #fff; border-right: 0; }
.deck { display: flex; flex-direction: column; gap: 11px; padding: 5px 0 0 8px; }
.deck svg { width: 18px; height: 18px; }
```
